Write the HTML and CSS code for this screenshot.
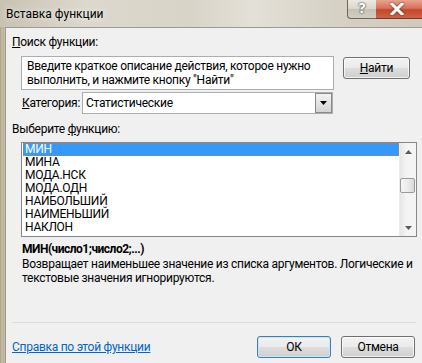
FILE: index.html
```html
<!DOCTYPE html>
<html lang="ru">
<head>
<meta charset="utf-8">
<link rel="stylesheet" href="styles.css">
</head>
<body>
<div class="window">
  <div class="titlebar">
    <div class="title">Вставка функции</div>
    <div class="caption">
      <div class="cap-help">?</div>
      <div class="cap-close">
        <svg width="16" height="12" viewBox="0 0 16 12"><path d="M3 1 L13 11 M13 1 L3 11" stroke="#fff" stroke-width="3" stroke-linecap="square"/></svg>
      </div>
    </div>
  </div>
  <div class="client">
    <div class="label"><u>П</u>оиск функции:</div>
    <div class="search-row">
      <div class="textbox">Введите краткое описание действия, которое нужно выполнить, и нажмите кнопку "Найти"</div>
      <div class="btn find"><u>Н</u>айти</div>
    </div>
    <div class="cat-row">
      <div class="cat-label"><u>К</u>атегория:</div>
      <div class="select">
        <span class="select-text">Статистические</span>
        <span class="drop"><svg width="7" height="4" viewBox="0 0 7 4"><path d="M0 0 H7 L3.5 4 Z" fill="#000"/></svg></span>
      </div>
    </div>
    <div class="label pick">Выберите <u>ф</u>ункцию:</div>
    <div class="listbox">
      <div class="items">
        <div class="item sel">МИН</div>
        <div class="item">МИНА</div>
        <div class="item">МОДА.НСК</div>
        <div class="item">МОДА.ОДН</div>
        <div class="item">НАИБОЛЬШИЙ</div>
        <div class="item">НАИМЕНЬШИЙ</div>
        <div class="item">НАКЛОН</div>
      </div>
      <div class="scrollbar">
        <div class="arrow"><svg width="7" height="4" viewBox="0 0 7 4"><path d="M0 4 H7 L3.5 0 Z" fill="#5a5a5a"/></svg></div>
        <div class="track"><div class="thumb"></div></div>
        <div class="arrow"><svg width="7" height="4" viewBox="0 0 7 4"><path d="M0 0 H7 L3.5 4 Z" fill="#5a5a5a"/></svg></div>
      </div>
    </div>
    <div class="signature">МИН(число1;число2;...)</div>
    <div class="desc">Возвращает наименьшее значение из списка аргументов. Логические и текстовые значения игнорируются.</div>
    <div class="spacer"></div>
    <div class="separator"></div>
    <div class="footer">
      <a class="help-link" href="#">Справка по этой функции</a>
      <div class="btn ok">ОК</div>
      <div class="btn cancel">Отмена</div>
    </div>
  </div>
</div>
</body>
</html>
```
FILE: styles.css
```css
* { box-sizing: border-box; }
html, body { margin: 0; padding: 0; }
body {
  width: 422px;
  height: 363px;
  overflow: hidden;
  font-family: Roboto, "Noto Sans", sans-serif;
  font-size: 12px;
  letter-spacing: -0.27px;
  color: #000;
}
u { text-decoration: underline; text-underline-offset: 1px; }

.window {
  width: 422px;
  height: 363px;
  display: flex;
  flex-direction: column;
  background:
    linear-gradient(90deg, #a89d84 0px, #c9c0a8 2px, #b7ad93 4px, transparent 5px),
    linear-gradient(180deg, #d6d2c6 0%, #d2cdbf 30%, #cfc8b6 100%);
}

.titlebar {
  height: 27px;
  display: flex;
  justify-content: space-between;
  align-items: flex-start;
  background: linear-gradient(90deg, #c8c2b2 0%, #dcd8cd 20%, #d9d4c8 45%, #e3e0d8 60%, #d6d1c4 80%, #cfcabb 100%);
}
.title {
  padding: 6px 0 0 6px;
  line-height: 16px;
  font-size: 12px;
  letter-spacing: 0;
  color: #000;
  text-shadow: 0 0 6px rgba(255,255,255,0.9);
}
.caption { display: flex; }
.cap-help {
  width: 29px;
  height: 19px;
  border: 1px solid #6b6658;
  border-top: none;
  border-right: none;
  border-radius: 0 0 0 4px;
  background: linear-gradient(180deg, #ece9e2 0%, #d9d5cb 50%, #c5c0b3 51%, #d2cec4 100%);
  color: #fff;
  font-weight: bold;
  font-size: 14px;
  letter-spacing: 0;
  line-height: 17px;
  text-align: center;
  text-shadow: 0 0 2px #333, 0 0 1px #333;
  font-family: "DejaVu Sans", sans-serif;
}
.cap-close {
  width: 46px;
  height: 19px;
  border-bottom: 1px solid #6b3b2c;
  background: linear-gradient(180deg, #e8a38e 0%, #d7735b 45%, #c4462a 55%, #d2624a 100%);
  display: flex;
  align-items: center;
  justify-content: center;
  padding-right: 4px;
}
.cap-close svg { filter: drop-shadow(0 0 1px #5a2a1a); }

.client {
  flex: 1;
  margin-left: 5px;
  background: #f0f0f0;
  border-top: 1px solid #9c9a92;
  border-left: 1px solid #9c9a92;
  padding: 6px 6px 5px 6px;
  display: flex;
  flex-direction: column;
}
.label { line-height: 16px; height: 16px; }

.search-row {
  display: flex;
  align-items: flex-start;
  margin-top: 6px;
  padding-left: 9px;
}
.textbox {
  width: 313px;
  height: 34px;
  border: 1px solid #abadb3;
  background: #fff;
  padding: 2px 5px 0 5px;
  line-height: 14px;
}
.btn {
  height: 22px;
  border: 1px solid #707070;
  border-radius: 3px;
  background: linear-gradient(180deg, #f2f2f2 0%, #ebebeb 48%, #dddddd 52%, #cfcfcf 100%);
  box-shadow: inset 0 0 0 1px rgba(255,255,255,0.7);
  display: flex;
  align-items: center;
  justify-content: center;
  line-height: 14px;
}
.find {
  width: 67px;
  margin-left: 9px;
  margin-top: 1px;
}

.cat-row {
  display: flex;
  align-items: center;
  margin-top: 2px;
  padding-left: 10px;
}
.cat-label { width: 60px; line-height: 16px; white-space: nowrap; }
.select {
  width: 251px;
  height: 22px;
  border: 1px solid #abadb3;
  background: #fff;
  display: flex;
  align-items: center;
  justify-content: space-between;
  padding-left: 3px;
}
.select-text { line-height: 16px; }
.drop {
  width: 17px;
  height: 20px;
  border: 1px solid #8a8a8a;
  background: linear-gradient(180deg, #f3f3f3 0%, #e4e4e4 50%, #d4d4d4 100%);
  display: flex;
  align-items: center;
  justify-content: center;
}

.pick { margin-top: 7px; }

.listbox {
  margin-top: 5px;
  margin-left: 9px;
  width: 396px;
  height: 95px;
  border: 1px solid #828790;
  background: #fff;
  display: flex;
}
.items {
  flex: 1;
  padding-left: 1px;
}
.item {
  height: 13px;
  line-height: 13px;
  padding-left: 2px;
}
.item.sel {
  background: #3399ff;
  color: #fff;
  outline: 1px dotted #d07a2a;
  outline-offset: -1px;
}
.scrollbar {
  width: 17px;
  display: flex;
  flex-direction: column;
  background: linear-gradient(90deg, #e6e6e6 0%, #f4f4f4 40%, #f4f4f4 100%);
  border-left: 1px solid #ececec;
}
.arrow {
  height: 17px;
  display: flex;
  align-items: center;
  justify-content: center;
}
.track { flex: 1; }
.thumb {
  margin-top: 18px;
  width: 15px;
  height: 15px;
  border: 1px solid #9a9a9a;
  border-radius: 2px;
  background: linear-gradient(90deg, #f5f5f5 0%, #ececec 50%, #d8d8d8 100%);
}

.signature {
  margin-top: 4px;
  padding-left: 10px;
  font-weight: bold;
  letter-spacing: -0.5px;
  line-height: 16px;
}
.desc {
  padding-left: 10px;
  line-height: 14px;
  width: 404px;
}
.spacer { flex: 1; }
.separator {
  height: 1px;
  background: #dcdcdc;
  margin: 0 0 13px 0;
  width: 404px;
}
.footer {
  display: flex;
  align-items: center;
  height: 22px;
}
.help-link {
  color: #0066cc;
  text-decoration: underline;
  flex: 1;
  line-height: 16px;
}
.ok {
  width: 74px;
  border-color: #3c7fb1;
  box-shadow: inset 0 0 0 1px #c8e6f8;
}
.cancel {
  width: 74px;
  margin-left: 10px;
  margin-right: 1px;
}
```
